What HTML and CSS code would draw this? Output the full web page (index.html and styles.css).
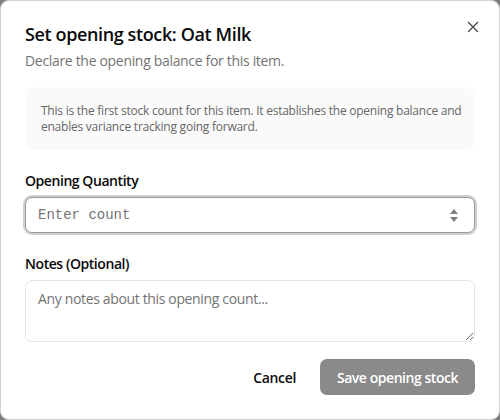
FILE: index.html
```html
<!DOCTYPE html>
<html lang="en">
<head>
<meta charset="utf-8">
<title>Set opening stock</title>
<link rel="stylesheet" href="styles.css">
</head>
<body>
<div class="dialog" role="dialog">
  <button class="close" aria-label="Close">
    <svg width="12" height="12" viewBox="0 0 12 12"><path d="M1.5 1.5 L10.5 10.5 M10.5 1.5 L1.5 10.5" stroke="#4a4a4a" stroke-width="1.4" stroke-linecap="round" fill="none"/></svg>
  </button>
  <header class="head">
    <h2 class="title">Set opening stock: Oat Milk</h2>
    <p class="desc">Declare the opening balance for this item.</p>
  </header>
  <div class="info">This is the first stock count for this item. It establishes the opening balance and enables variance tracking going forward.</div>
  <div class="field">
    <label class="label" for="qty">Opening Quantity</label>
    <div class="input-wrap">
      <input id="qty" class="input" type="text" placeholder="Enter count">
      <svg class="spin" width="10" height="20" viewBox="0 0 10 20"><path d="M5 4 L9 9 L1 9 Z M1 12 L9 12 L5 17 Z" fill="#808080"/></svg>
    </div>
  </div>
  <div class="field">
    <label class="label" for="notes">Notes (Optional)</label>
    <textarea id="notes" class="textarea" placeholder="Any notes about this opening count..."></textarea>
  </div>
  <footer class="actions">
    <button class="btn-ghost">Cancel</button>
    <button class="btn-primary">Save opening stock</button>
  </footer>
</div>
</body>
</html>
```
FILE: styles.css
```css
html, body {
  margin: 0;
  padding: 0;
  background: #7f7f7f;
}
body {
  font-family: "Open Sans", "Noto Sans", sans-serif;
  color: #0a0a0a;
}
.dialog {
  position: relative;
  box-sizing: border-box;
  width: 500px;
  height: 420px;
  background: #fff;
  border: 1px solid #d4d4d4;
  border-radius: 9px;
  padding: 23px 24px 24px 24px;
  display: flex;
  flex-direction: column;
}
.close {
  position: absolute;
  top: 18px;
  right: 18px;
  width: 16px;
  height: 16px;
  padding: 0;
  border: 0;
  background: transparent;
  display: flex;
  align-items: center;
  justify-content: center;
}
.head {
  display: flex;
  flex-direction: column;
  gap: 7px;
}
.title {
  margin: 0;
  font-size: 18px;
  line-height: 20px;
  font-weight: 600;
  letter-spacing: -0.38px;
}
.desc {
  margin: 0;
  font-size: 14px;
  line-height: 20px;
  color: #737373;
  letter-spacing: -0.32px;
}
.info {
  margin-top: 16px;
  background: #fafafa;
  border-radius: 9px;
  padding: 16px 10px 15px 16px;
  font-size: 12px;
  line-height: 16px;
  color: #666;
  letter-spacing: -0.24px;
}
.field {
  margin-top: 21px;
  display: flex;
  flex-direction: column;
  gap: 6px;
}
.label {
  font-size: 14px;
  line-height: 20px;
  font-weight: 600;
  letter-spacing: -0.44px;
}
.input-wrap {
  position: relative;
}
.input {
  box-sizing: border-box;
  width: 100%;
  height: 36px;
  border: 1px solid #9a9a9a;
  border-radius: 7px;
  box-shadow: 0 0 0 2px #d0d0d0;
  padding: 0 12px;
  font-family: "Liberation Mono", monospace;
  font-size: 14px;
  outline: none;
  background: #fff;
}
.input::placeholder {
  color: #737373;
}
.spin {
  position: absolute;
  right: 16px;
  top: 8px;
}
.textarea {
  box-sizing: border-box;
  width: 100%;
  height: 62px;
  border: 1px solid #e5e5e5;
  border-radius: 7px;
  padding: 8px 12px;
  font-family: "Open Sans", "Noto Sans", sans-serif;
  font-size: 14px;
  line-height: 20px;
  letter-spacing: -0.35px;
  resize: vertical;
  background: #fff;
}
.textarea::placeholder {
  color: #737373;
}
.actions {
  margin-top: 17px;
  display: flex;
  justify-content: flex-end;
  gap: 8px;
}
.btn-ghost, .btn-primary {
  height: 36px;
  border: 0;
  border-radius: 7px;
  padding: 0 16px;
  font-family: "Open Sans", "Noto Sans", sans-serif;
  font-size: 14px;
  font-weight: 600;
  white-space: nowrap;
}
.btn-ghost {
  background: transparent;
  color: #0a0a0a;
  letter-spacing: -0.33px;
}
.btn-primary {
  width: 155px;
  background: #8a8a8a;
  color: #fff;
  letter-spacing: -0.45px;
}
```
